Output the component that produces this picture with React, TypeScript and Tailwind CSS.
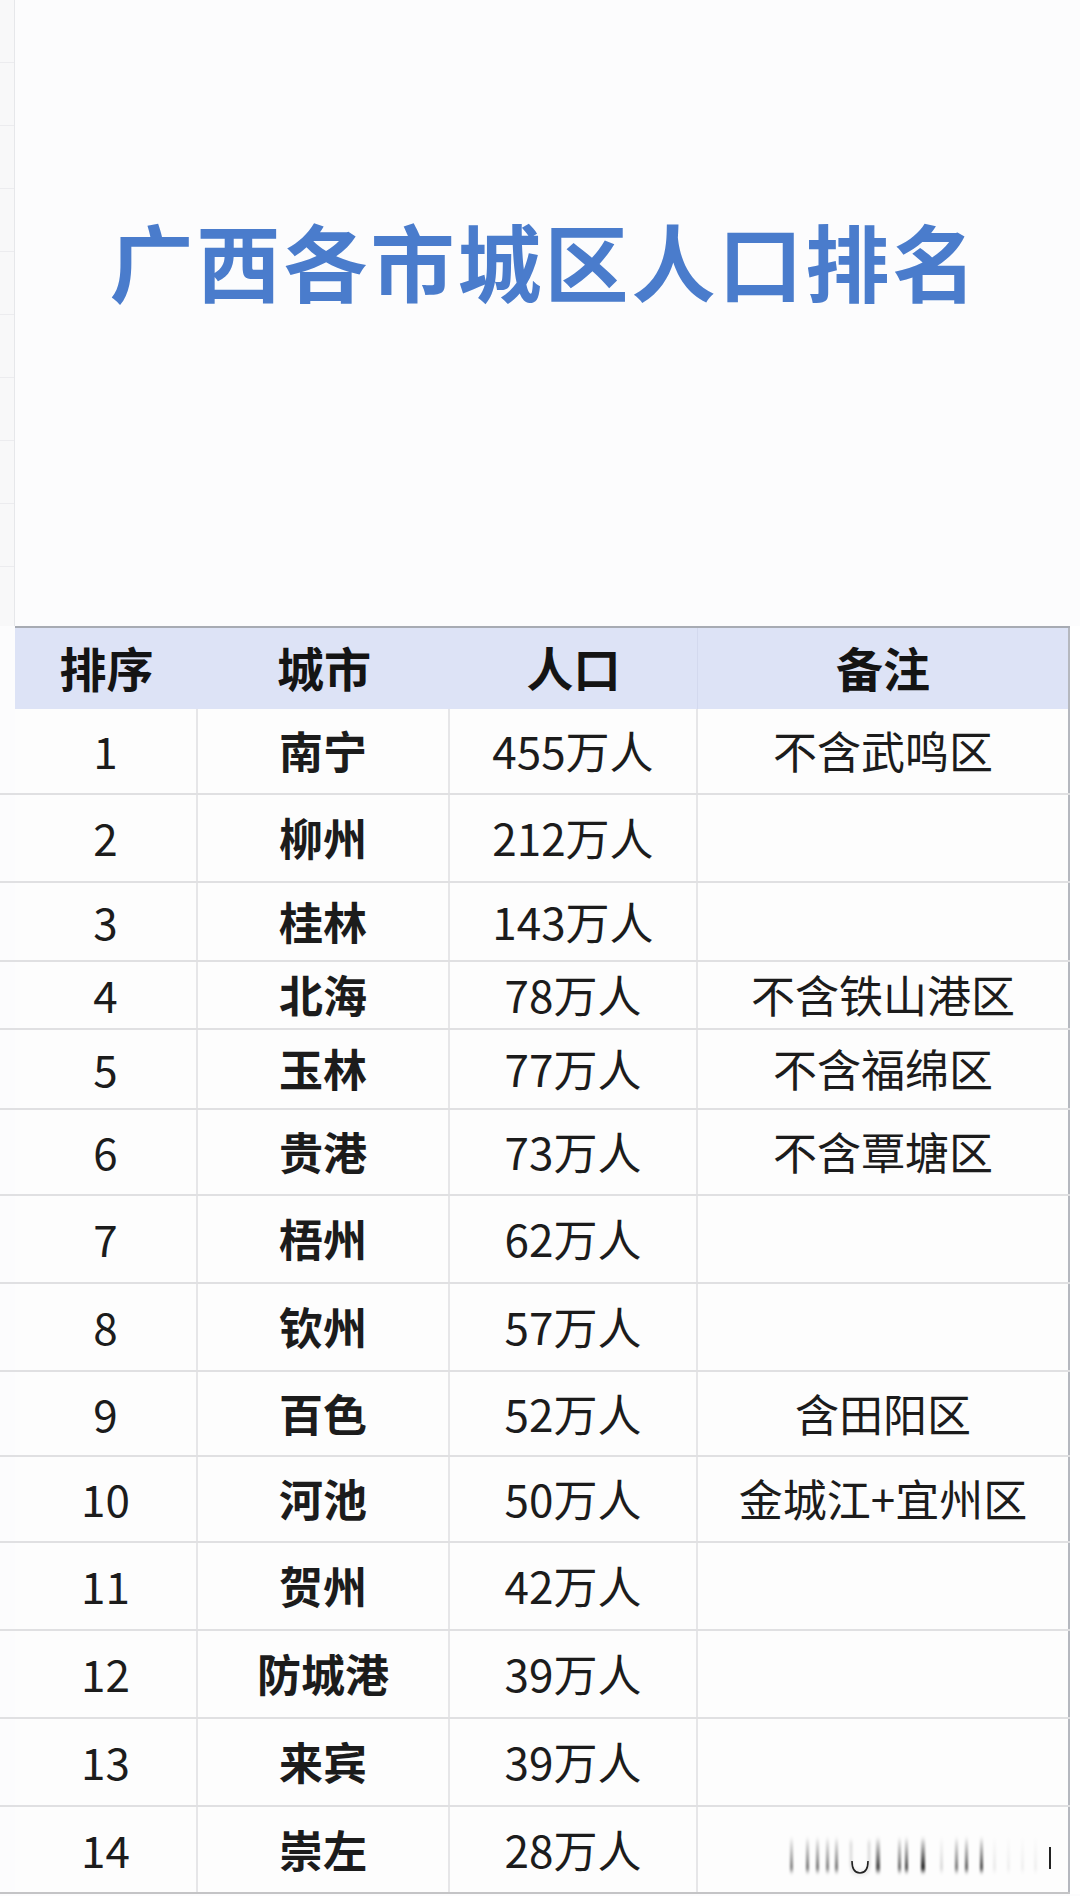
import React from 'react';

type Row = {
  rank: string;
  city: string;
  pop: string;
  note: string;
  h: string;
};

const rows: Row[] = [
  { rank: '1', city: '南宁', pop: '455万人', note: '不含武鸣区', h: 'h-[86px]' },
  { rank: '2', city: '柳州', pop: '212万人', note: '', h: 'h-[88px]' },
  { rank: '3', city: '桂林', pop: '143万人', note: '', h: 'h-[79px]' },
  { rank: '4', city: '北海', pop: '78万人', note: '不含铁山港区', h: 'h-[68px]' },
  { rank: '5', city: '玉林', pop: '77万人', note: '不含福绵区', h: 'h-[80px]' },
  { rank: '6', city: '贵港', pop: '73万人', note: '不含覃塘区', h: 'h-[86px]' },
  { rank: '7', city: '梧州', pop: '62万人', note: '', h: 'h-[88px]' },
  { rank: '8', city: '钦州', pop: '57万人', note: '', h: 'h-[88px]' },
  { rank: '9', city: '百色', pop: '52万人', note: '含田阳区', h: 'h-[85px]' },
  { rank: '10', city: '河池', pop: '50万人', note: '金城江+宜州区', h: 'h-[86px]' },
  { rank: '11', city: '贺州', pop: '42万人', note: '', h: 'h-[88px]' },
  { rank: '12', city: '防城港', pop: '39万人', note: '', h: 'h-[88px]' },
  { rank: '13', city: '来宾', pop: '39万人', note: '', h: 'h-[88px]' },
  { rank: '14', city: '崇左', pop: '28万人', note: '', h: 'h-[87px]' },
];

// blurred watermark strip in the last row
function Watermark() {
  const bars: Array<[number, number, number]> = [
    [5, 3, 0.55],
    [21, 3, 0.6],
    [31, 3, 0.6],
    [41, 3, 0.55],
    [50, 3, 0.6],
    [91, 4, 0.8],
    [113, 3, 0.65],
    [120, 3, 0.8],
    [136, 4, 0.95],
    [155, 3, 0.15],
    [170, 3, 0.6],
    [180, 3, 0.7],
    [195, 3, 0.8],
    [208, 3, 0.08],
    [222, 3, 0.06],
    [236, 3, 0.06],
    [249, 3, 0.06],
  ];
  return (
    <svg width="270" height="44" viewBox="0 0 270 44" className="absolute left-[87px] top-[28px]">
      <defs>
        <filter id="wmblur" x="-50%" y="-50%" width="200%" height="200%">
          <feGaussianBlur stdDeviation="1.2 2.5" />
        </filter>
        <linearGradient id="wmfade" x1="0" y1="0" x2="0" y2="1">
          <stop offset="0" stopColor="#000" stopOpacity="0.1" />
          <stop offset="1" stopColor="#000" stopOpacity="1" />
        </linearGradient>
      </defs>
      <g filter="url(#wmblur)">
        {bars.map(([x, w, o], i) => (
          <rect key={i} x={x} y={4} width={w} height={32} fill="url(#wmfade)" opacity={o} />
        ))}
        <path d="M66 6 V30 Q66 38 75 38 Q84 38 84 30 V6" fill="none" stroke="#000" strokeOpacity="0.12" strokeWidth="3" />
      </g>
      <path d="M67 26 Q67 38 75 38 Q83 38 83 26" fill="none" stroke="#222" strokeWidth="1.6" />
      <rect x="264" y="12" width="2" height="22" fill="#222" />
    </svg>
  );
}

export default function App() {
  const gridLines = Array.from({ length: 10 });

  return (
    <div
      className="w-[1080px] h-[1896px] overflow-hidden bg-[#fcfcfd] flex flex-col text-[#1c1c1c]"
      style={{ fontFamily: '"Noto Sans CJK SC", "Noto Sans", sans-serif' }}
    >
      {/* Title area */}
      <div className="flex h-[626px] shrink-0">
        <div className="w-[15px] shrink-0 border-r border-[#e6e7ea] bg-[#f8f8f9] flex flex-col">
          {gridLines.map((_, i) => (
            <div key={i} className="h-[63px] shrink-0 border-b border-[#ececef]" />
          ))}
        </div>
        <div className="flex-1 flex justify-center pt-[218px] pl-[4px] pr-[10px]">
          <h1 className="text-[84px] leading-none font-bold tracking-[3px] text-[#4a7ccc]">广西各市城区人口排名</h1>
        </div>
      </div>

      {/* Header */}
      <div className="flex h-[83px] shrink-0">
        <div className="w-[15px] shrink-0 bg-[#fcfcfd]" />
        <div className="flex w-[1055px] border-t-2 border-[#a7abb3] bg-[#dde3f6] text-[47px] font-bold text-[#141414]">
          <div className="w-[183px] flex items-center justify-center pb-[2px]">排序</div>
          <div className="w-[252px] flex items-center justify-center pb-[2px]">城市</div>
          <div className="w-[248px] flex items-center justify-center border-r border-[#d3d9ee] pb-[2px]">人口</div>
          <div className="w-[372px] flex items-center justify-center border-r-2 border-[#b5b8bf] pb-[2px]">备注</div>
        </div>
        <div className="flex-1 bg-white" />
      </div>

      {/* Body rows */}
      {rows.map((r, idx) => (
        <div key={r.rank} className={`flex shrink-0 ${r.h}`}>
          <div className={`w-[15px] shrink-0 border-b-2 ${idx === rows.length - 1 ? 'border-[#c4c4c6]' : 'border-[#e0e0e2]'}`} />
          <div
            className={`flex w-[1055px] shrink-0 border-b-2 bg-[#fdfdfd] text-[44px] ${
              idx === rows.length - 1 ? 'border-[#c4c4c6]' : 'border-[#e0e0e2]'
            }`}
          >
            <div className="w-[183px] flex items-center justify-center border-r-2 border-[#e6e6e8] pb-[2px]">{r.rank}</div>
            <div className="w-[252px] flex items-center justify-center border-r-2 border-[#e6e6e8] font-bold pb-[2px]">{r.city}</div>
            <div className="w-[248px] flex items-center justify-center border-r-2 border-[#e6e6e8] pb-[2px]">{r.pop}</div>
            <div className="relative w-[372px] flex items-center justify-center border-r-2 border-[#b5b8bf] pb-[2px]">
              {r.note}
              {idx === rows.length - 1 && <Watermark />}
            </div>
          </div>
          <div className="flex-1 bg-white" />
        </div>
      ))}
    </div>
  );
}
